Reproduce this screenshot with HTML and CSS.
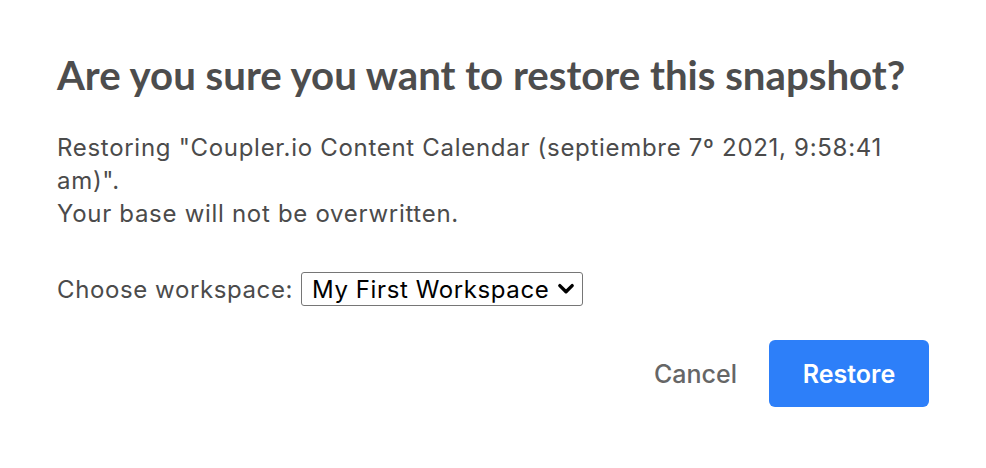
FILE: index.html
```html
<!DOCTYPE html>
<html lang="en">

<head>
    <meta charset="UTF-8">
    <meta name="viewport" content="width=device-width, initial-scale=1.0">
    <title>Restore snapshot</title>
    <link rel="stylesheet" href="styles.css">
</head>

<body>
    <div class="dialog">
        <h1 class="title">Are you sure you want to restore this snapshot?</h1>
        <p class="desc">Restoring "Coupler.io Content Calendar (septiembre 7º 2021, 9:58:41 am)".<br>Your base will not be overwritten.</p>
        <div class="field">
            <label for="workspace">Choose workspace:</label>
            <div class="select">
                <span id="workspace">My First Workspace</span>
                <svg class="chevron" viewBox="0 0 16 16" width="16" height="16">
                    <path d="M2.5 5 L8 10.5 L13.5 5" fill="none" stroke="#000" stroke-width="3" stroke-linecap="round" stroke-linejoin="round"/>
                </svg>
            </div>
        </div>
        <div class="actions">
            <button class="cancel-btn">Cancel</button>
            <button class="restore-btn">Restore</button>
        </div>
    </div>
</body>

</html>
```

FILE: styles.css
```css
*{
    margin: 0;
    padding: 0;
    box-sizing: border-box;
}
body{
    background-color: #fff;
    font-family: Inter, "Noto Sans", sans-serif;
    color: #4b4b4b;
}
.dialog{
    width: 986px;
    padding: 50px 57px 0 57px;
}
.title{
    font-family: Lato, "Open Sans", sans-serif;
    font-weight: 700;
    font-size: 40.2px;
    line-height: 50px;
    color: #4d4d4d;
}
.desc{
    margin-top: 31px;
    font-size: 24px;
    letter-spacing: 0.7px;
    line-height: 33px;
}
.field{
    margin-top: 42px;
    display: flex;
    align-items: center;
    gap: 8px;
    font-size: 24px;
    letter-spacing: 0.6px;
}
.select{
    display: flex;
    align-items: center;
    gap: 8px;
    height: 34px;
    padding: 0 7px 0 10px;
    border: 1px solid #767676;
    border-radius: 3px;
    color: #000;
}
.chevron{
    width: 18px;
    height: 18px;
}
.actions{
    margin-top: 34px;
    display: flex;
    justify-content: flex-end;
    align-items: center;
    gap: 32px;
}
.cancel-btn{
    background: none;
    border: none;
    font-family: Inter, "Noto Sans", sans-serif;
    font-size: 25px;
    font-weight: 500;
    color: #666;
}
.restore-btn{
    width: 160px;
    height: 67px;
    border: none;
    border-radius: 6px;
    background-color: #2d7ff9;
    color: #fff;
    font-family: Inter, "Noto Sans", sans-serif;
    font-size: 25px;
    font-weight: 600;
}
```
